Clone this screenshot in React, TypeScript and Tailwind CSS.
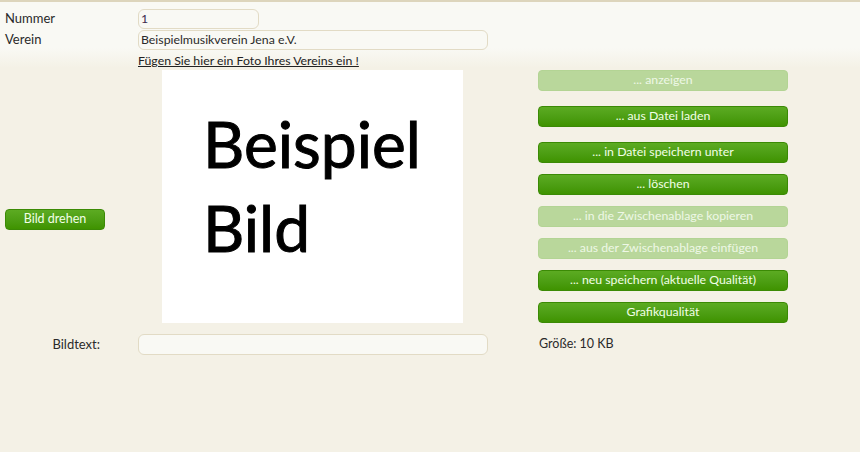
import React from 'react';

interface ActionButton {
  label: string;
  enabled: boolean;
  gap: string;
}

const actions: ActionButton[] = [
  { label: '... anzeigen', enabled: false, gap: 'mt-0' },
  { label: '... aus Datei laden', enabled: true, gap: 'mt-[15px]' },
  { label: '... in Datei speichern unter', enabled: true, gap: 'mt-[15px]' },
  { label: '... löschen', enabled: true, gap: 'mt-[11px]' },
  { label: '... in die Zwischenablage kopieren', enabled: false, gap: 'mt-[11px]' },
  { label: '... aus der Zwischenablage einfügen', enabled: false, gap: 'mt-[11px]' },
  { label: '... neu speichern (aktuelle Qualität)', enabled: true, gap: 'mt-[11px]' },
  { label: 'Grafikqualität', enabled: true, gap: 'mt-[11px]' },
];

function GreenButton({ label, enabled = true, className = '' }: { label: string; enabled?: boolean; className?: string }) {
  const look = enabled
    ? 'bg-gradient-to-b from-[#5cab22] to-[#3f9300] border-[#3b8a05] text-[#f2ffe6]'
    : 'bg-[#b9d79b] border-[#b3d494] text-[#eef7e6]';
  return (
    <button className={`h-[21px] rounded-[4px] border text-[12.3px] leading-none flex items-center justify-center ${look} ${className}`}>
      {label}
    </button>
  );
}

export default function App() {
  return (
    <div className="w-[860px] h-[452px] overflow-hidden border-t-2 border-[#ddd5bc] bg-[linear-gradient(to_bottom,#f9f9f4_0px,#f9f9f4_46px,#f4f1e6_66px,#f4f1e6_100%)] text-[#2a2a2a] font-['Lato','Liberation_Sans',sans-serif]">
      <div className="flex items-center mt-[7px] h-[19px]">
        <span className="w-[138px] pl-[5px] text-[13px]">Nummer</span>
        <div className="w-[121px] h-[20px] rounded-[6px] border border-[#e2dbc5] bg-[#f9f9f4] px-[2px] text-[12.3px] leading-[18px] text-[#3b2b4d]">1</div>
      </div>
      <div className="flex items-center mt-[2px] h-[20px]">
        <span className="w-[138px] pl-[5px] text-[13px]">Verein</span>
        <div className="w-[350px] h-[20px] rounded-[6px] border border-[#e2dbc5] bg-[#f9f9f4] px-[2px] text-[12.3px] leading-[18px]">Beispielmusikverein Jena e.V.</div>
      </div>
      <div className="pl-[138px] mt-[2px] h-[18px] text-[12.3px] leading-[18px] underline text-[#222]">
        Fügen Sie hier ein Foto Ihres Vereins ein !
      </div>
      <div className="flex">
        <div className="w-[138px] pl-[5px] pt-[139px]">
          <GreenButton label="Bild drehen" className="w-[100px] text-[12.5px]" />
        </div>
        <div className="ml-[24px] w-[301px] h-[253px] bg-white pl-[41px] pt-[32px] text-black font-['Lato','Liberation_Sans',sans-serif] text-[64px] leading-[84px] [-webkit-text-stroke:1px_black]">
          <div>Beispiel</div>
          <div>Bild</div>
        </div>
        <div className="ml-[75px] w-[250px] flex flex-col">
          {actions.map((a) => (
            <GreenButton key={a.label} label={a.label} enabled={a.enabled} className={a.gap} />
          ))}
        </div>
      </div>
      <div className="flex items-center mt-[11px] h-[21px]">
        <span className="w-[100px] text-right text-[13px]">Bildtext:</span>
        <div className="ml-[38px] w-[350px] h-[21px] rounded-[6px] border border-[#e2dbc5] bg-[#f9f9f4]" />
        <span className="ml-[51px] text-[12.5px]">Größe: 10 KB</span>
      </div>
    </div>
  );
}
